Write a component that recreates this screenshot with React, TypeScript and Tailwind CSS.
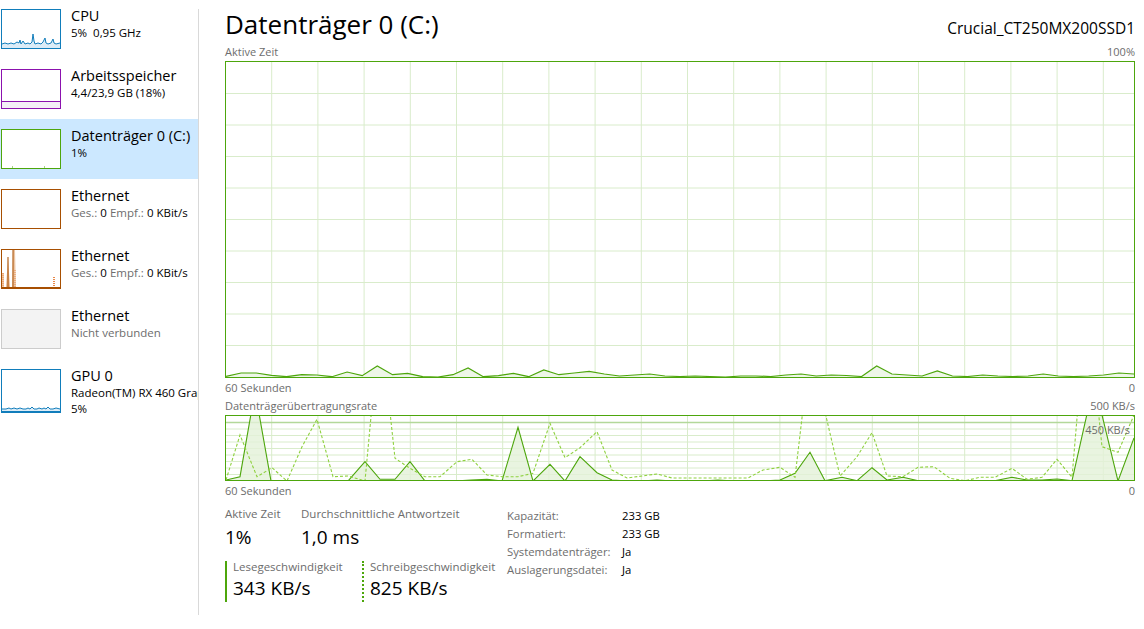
import React from 'react';

const GREEN = '#4da60c';
const GRID = '#d9eccb';

// Aktive Zeit (px above the bottom of the 315px plot)
const ACTIVE = [
  0.7, 4, 4, 1.7, 0.3, 2.3, 2, 0.3, 5, 1.3, 11, 2.3, 3.7, 0.3, 0, 2.3, 9, 0.3, 1.3, 3.7, 0.3, 7, 2.3, 4, 5.7,
  3, 1, 2, 3, 1, 0.5, 1, 0.5, 0, 1, 1, 0.5, 2, 3, 1, 2, 1.5, 0.5, 11, 3, 2, 1, 6, 1, 0.5, 2, 1, 0.5, 1, 3, 1,
  0.5, 1, 2, 4, 3,
];

// Übertragungsrate, Seitenkoordinaten
const READ: [number, number][] = [
  [226, 480], [240, 476.7], [255, 391], [271, 481], [286, 481], [301, 481], [317, 481], [333, 481], [348, 481],
  [365, 461.7], [380, 479.3], [395, 479.3], [410, 461.7], [425, 481], [440, 481], [456, 481], [471, 480],
  [487, 479.3], [502, 481], [518, 427.3], [533, 481], [550, 464.3], [565, 481], [580, 456.7], [597, 472.7],
  [612, 480], [627, 481], [642, 481], [657, 480], [672, 481], [688, 481], [703, 481], [718, 480], [733, 481],
  [748, 481], [763, 481], [780, 480], [795, 473.3], [810, 452.3], [825, 480.7], [842, 477.3], [857, 480.7],
  [872, 467.7], [887, 480], [903, 477.3], [918, 480.7], [934, 480.7], [950, 480.7], [965, 480.7], [980, 480.7],
  [995, 480.7], [1012, 477.3], [1027, 480], [1042, 480], [1057, 479], [1072, 480.7], [1087, 414], [1102, 415],
  [1118, 481], [1134, 438],
];

const WRITE: [number, number][] = [
  [226, 480], [240, 435], [257, 476.7], [272, 467.7], [287, 481], [302, 446.7], [317, 419.3], [333, 476.7],
  [348, 476], [365, 481], [380, 320], [395, 458.3], [410, 468.3], [425, 476.7], [440, 476.7], [457, 461.7],
  [472, 459.3], [487, 475], [502, 476.7], [518, 476.7], [533, 473.3], [550, 423.3], [565, 457.7], [580, 447.7],
  [597, 431.7], [612, 470], [627, 478], [642, 476], [657, 474], [672, 478], [688, 478], [703, 478], [718, 478],
  [733, 478], [748, 478], [763, 470], [780, 467.3], [795, 477.3], [810, 350], [825, 412], [840, 476],
  [857, 456.7], [872, 432.7], [887, 476], [903, 476.7], [918, 467.3], [934, 466.7], [950, 478.3], [965, 480.7],
  [980, 477.3], [995, 477.3], [1012, 468.3], [1027, 479.3], [1042, 477.3], [1057, 459.3], [1072, 477.3],
  [1087, 300], [1102, 446.7], [1118, 452.3], [1134, 415],
];

const vGrid = Array.from({ length: 19 }, (_, k) => 45.7 + k * 46.2);

function ActiveChart() {
  const W = 908;
  const H = 315;
  const step = W / 60;
  const pts = ACTIVE.map((v, i) => `${(i * step).toFixed(1)},${(H - v).toFixed(1)}`).join(' ');
  return (
    <div className="h-[317px] border border-[#4da60c]">
      <svg width={W} height={H} className="block">
        {vGrid.map((x) => (
          <line key={x} x1={x} x2={x} y1={0} y2={H} stroke={GRID} />
        ))}
        {Array.from({ length: 9 }, (_, k) => (k + 1) * 31.5).map((y) => (
          <line key={y} x1={0} x2={W} y1={y} y2={y} stroke={GRID} />
        ))}
        <polygon points={`0,${H} ${pts} ${W},${H}`} fill="#eef6e8" />
        <polyline points={pts} fill="none" stroke={GREEN} strokeWidth="1.2" />
      </svg>
    </div>
  );
}

function RateChart() {
  const W = 908;
  const H = 64;
  const toPts = (a: [number, number][]) => a.map(([x, y]) => `${x - 226},${y - 416}`).join(' ');
  const read = toPts(READ);
  return (
    <div className="relative h-[66px] border border-[#4da60c]">
      <svg width={W} height={H} className="block">
        {vGrid.map((x) => (
          <line key={x} x1={x} x2={x} y1={0} y2={H} stroke={GRID} />
        ))}
        {Array.from({ length: 9 }, (_, k) => (k + 1) * 6.5).map((y, k) => (
          <line key={y} x1={0} x2={W} y1={y} y2={y} stroke={k === 0 ? '#b3d89a' : GRID} strokeWidth={k === 0 ? 1.4 : 1} />
        ))}
        <polygon points={`0,${H} ${read} ${W},${H}`} fill="#e4f1d8" fillOpacity="0.8" />
        <polyline points={read} fill="none" stroke={GREEN} strokeWidth="1.1" />
        <polyline points={toPts(WRITE)} fill="none" stroke="#8fd13f" strokeWidth="1.1" strokeDasharray="3 2" />
      </svg>
      <span className="absolute right-[4px] top-[6px] text-[11px] leading-[16px] text-[#6d6d6d]">450 KB/s</span>
    </div>
  );
}

function CpuThumb() {
  const pts = '0,34 3,33 6,34 9,33 12,34 15,32 17,33 18,30 19,34 21,31 23,34 26,33 28,34 30,32 31,24 32,31 33,34 36,33 39,34 41,32 43,28 44,33 46,34 49,33 51,29 52,33 54,34 58,33';
  return (
    <div className="w-[60px] h-[40px] border border-[#117dbb] bg-white">
      <svg width="58" height="38" className="block">
        <polygon points={`0,38 ${pts} 58,38`} fill="#dcecf7" />
        <polyline points={pts} fill="none" stroke="#117dbb" strokeWidth="1" />
      </svg>
    </div>
  );
}

function MemThumb() {
  return (
    <div className="w-[60px] h-[40px] border border-[#8b12ae] bg-white flex flex-col">
      <div className="flex-1" />
      <div className="h-[7px] border-t border-[#8b12ae] bg-[#f4eff6]" />
    </div>
  );
}

function DiskThumb() {
  return (
    <div className="w-[60px] h-[40px] border border-[#4da60c] bg-white">
      <svg width="58" height="38" className="block">
        <line x1="10" x2="11" y1="37" y2="37" stroke="#4da60c" />
        <line x1="42" x2="43" y1="37" y2="37" stroke="#4da60c" />
      </svg>
    </div>
  );
}

function EthThumb({ spikes }: { spikes?: boolean }) {
  return (
    <div className="w-[60px] h-[40px] border border-[#a74f01] bg-white">
      {spikes && (
        <svg width="58" height="38" className="block">
          <polygon points="0,38 0,23 2,23 2,38" fill="#f3c9a4" />
          <line x1="1" x2="1" y1="23" y2="38" stroke="#e8894a" strokeDasharray="1 1" />
          <polygon points="4,38 6,7 8,38" fill="#e7b68c" />
          <line x1="6" x2="6" y1="7" y2="38" stroke="#a74f01" />
          <polygon points="10,38 11,0 13,0 14,38" fill="#ecc7a6" />
          <line x1="11" x2="11" y1="0" y2="38" stroke="#a74f01" />
          <line x1="13" x2="13" y1="20" y2="38" stroke="#e8894a" strokeDasharray="1 1" />
          <line x1="52" x2="52" y1="27" y2="38" stroke="#e8894a" strokeDasharray="1 1" strokeWidth="2" />
          <line x1="0" x2="58" y1="37.5" y2="37.5" stroke="#a74f01" />
        </svg>
      )}
    </div>
  );
}

function GpuThumb() {
  const pts = '0,39 4,39 7,38 9,39 12,38 15,39 18,38 21,39 24,39 26,38 28,39 30,37 32,39 35,39 37,38 40,39 42,38 44,39 46,37 48,39 51,39 54,38 58,39';
  return (
    <div className="w-[60px] h-[44px] border border-[#117dbb] bg-white">
      <svg width="58" height="42" className="block">
        <polygon points={`0,42 ${pts} 58,42`} fill="#dcecf7" />
        <polyline points={pts} fill="none" stroke="#117dbb" />
        <line x1="0" x2="58" y1="41.5" y2="41.5" stroke="#117dbb" />
      </svg>
    </div>
  );
}

function SideRow({
  thumb,
  title,
  children,
  selected,
  tall,
}: {
  thumb: React.ReactNode;
  title: string;
  children: React.ReactNode;
  selected?: boolean;
  tall?: boolean;
}) {
  return (
    <div className={`flex ${tall ? 'h-[64px]' : 'h-[60px]'} ${selected ? 'bg-[#cce8ff]' : ''}`}>
      <div className="ml-px mt-[10px] shrink-0">{thumb}</div>
      <div className="ml-[10px] mt-[7px] whitespace-nowrap">
        <div className="text-[14.5px] leading-[19px]">{title}</div>
        <div className="text-[11.5px] leading-[16px]">{children}</div>
      </div>
    </div>
  );
}

const Gray = ({ children }: { children: React.ReactNode }) => <span className="text-[#6d6d6d]">{children}</span>;

export default function App() {
  return (
    <div className="w-[1144px] h-[629px] bg-white flex overflow-hidden text-black font-['Open_Sans','Noto_Sans',sans-serif]">
      {/* Seitenleiste */}
      <aside className="w-[198px] shrink-0 overflow-hidden flex flex-col -mt-px">
        <SideRow thumb={<CpuThumb />} title="CPU">5%&nbsp; 0,95 GHz</SideRow>
        <SideRow thumb={<MemThumb />} title="Arbeitsspeicher">4,4/23,9 GB (18%)</SideRow>
        <SideRow thumb={<DiskThumb />} title="Datenträger 0 (C:)" selected>1%</SideRow>
        <SideRow thumb={<EthThumb />} title="Ethernet">
          <Gray>Ges.:</Gray> 0 <Gray>Empf.:</Gray> 0 KBit/s
        </SideRow>
        <SideRow thumb={<EthThumb spikes />} title="Ethernet">
          <Gray>Ges.:</Gray> 0 <Gray>Empf.:</Gray> 0 KBit/s
        </SideRow>
        <SideRow thumb={<div className="w-[60px] h-[40px] border border-[#cccccc] bg-[#f3f3f3]" />} title="Ethernet">
          <Gray>Nicht verbunden</Gray>
        </SideRow>
        <SideRow thumb={<GpuThumb />} title="GPU 0" tall>
          <div>Radeon(TM) RX 460 Graphics</div>
          <div>5%</div>
        </SideRow>
      </aside>
      <div className="w-px shrink-0 bg-[#d9d9d9] mt-[9px] mb-[14px]" />

      {/* Detailbereich */}
      <main className="flex-1 pl-[26px] pr-[9px] flex flex-col">
        <div className="h-[44px] pt-[8px] flex items-baseline justify-between">
          <h1 className="text-[26px] leading-[32px]">Datenträger 0 (C:)</h1>
          <span className="text-[15.5px] leading-[20px]">Crucial_CT250MX200SSD1</span>
        </div>
        <div className="h-[17px] flex justify-between text-[11px] leading-[16px] text-[#6d6d6d]">
          <span>Aktive Zeit</span>
          <span>100%</span>
        </div>
        <ActiveChart />
        <div className="h-[19px] flex justify-between items-center text-[11px] leading-[16px] text-[#6d6d6d]">
          <span>60 Sekunden</span>
          <span>0</span>
        </div>
        <div className="h-[18px] flex justify-between items-center text-[11px] leading-[16px] text-[#6d6d6d]">
          <span>Datenträgerübertragungsrate</span>
          <span>500 KB/s</span>
        </div>
        <RateChart />
        <div className="h-[19px] flex justify-between items-center text-[11px] leading-[16px] text-[#6d6d6d]">
          <span>60 Sekunden</span>
          <span>0</span>
        </div>

        <div className="flex items-start">
          <div className="w-[282px] pt-[6px]">
            <div className="flex">
              <div className="w-[76px]">
                <div className="text-[11.5px] leading-[16px] text-[#6d6d6d]">Aktive Zeit</div>
                <div className="text-[19px] leading-[28px] mt-[1px]">1%</div>
              </div>
              <div>
                <div className="text-[11.5px] leading-[16px] text-[#6d6d6d]">Durchschnittliche Antwortzeit</div>
                <div className="text-[19px] leading-[28px] mt-[1px]">1,0 ms</div>
              </div>
            </div>
            <div className="flex mt-[10px]">
              <div className="w-[137px] border-l-2 border-[#4da60c] pl-[6px]">
                <div className="text-[11.5px] leading-[12px] text-[#6d6d6d]">Lesegeschwindigkeit</div>
                <div className="text-[19px] leading-[28px] mt-[1px]">343 KB/s</div>
              </div>
              <div className="border-l-2 border-dotted border-[#4da60c] pl-[6px]">
                <div className="text-[11.5px] leading-[12px] text-[#6d6d6d]">Schreibgeschwindigkeit</div>
                <div className="text-[19px] leading-[28px] mt-[1px]">825 KB/s</div>
              </div>
            </div>
          </div>
          <div className="pt-[7px] grid grid-cols-[115px_auto] content-start text-[11.3px] leading-[18px]">
            <span className="text-[#6d6d6d]">Kapazität:</span>
            <span>233 GB</span>
            <span className="text-[#6d6d6d]">Formatiert:</span>
            <span>233 GB</span>
            <span className="text-[#6d6d6d]">Systemdatenträger:</span>
            <span>Ja</span>
            <span className="text-[#6d6d6d]">Auslagerungsdatei:</span>
            <span>Ja</span>
          </div>
        </div>
      </main>
    </div>
  );
}
